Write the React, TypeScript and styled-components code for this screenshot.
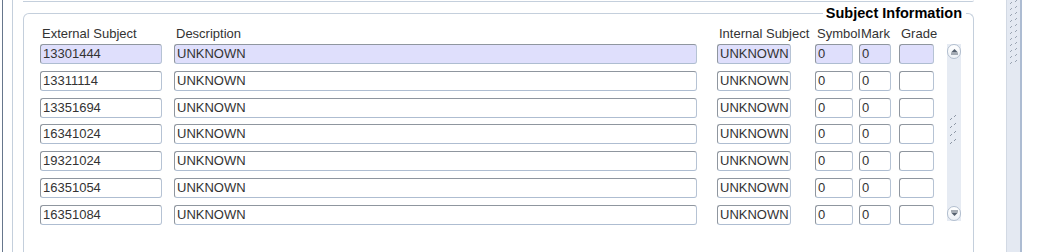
import styled, { createGlobalStyle } from "styled-components"

const GlobalStyle = createGlobalStyle`
  html, body {
    margin: 0;
    padding: 0;
    background: #ffffff;
  }
  body {
    width: 1040px;
    height: 252px;
    overflow: hidden;
    font-family: "Liberation Sans", Arial, sans-serif;
  }
`

type Column = { key: string; label: string; width: number; gap: number }

const columns: Column[] = [
  { key: "ext", label: "External Subject", width: 122, gap: 0 },
  { key: "desc", label: "Description", width: 523, gap: 12 },
  { key: "int", label: "Internal Subject", width: 74, gap: 20 },
  { key: "sym", label: "Symbol", width: 38, gap: 24 },
  { key: "mark", label: "Mark", width: 32, gap: 6 },
  { key: "grade", label: "Grade", width: 35, gap: 8 },
]

const codes = ["13301444", "13311114", "13351694", "16341024", "19321024", "16351054", "16351084"]

const rows = codes.map((code) => ({
  ext: code,
  desc: "UNKNOWN",
  int: "UNKNOWN",
  sym: "0",
  mark: "0",
  grade: "",
}))

export default function App() {
  return (
    <>
      <GlobalStyle />
      <Screen>
        <OuterRail />
        <Canvas>
          <UpperPanel />
          <Fieldset>
            <Legend>Subject Information</Legend>
            <HeaderRow>
              {columns.map((c) => (
                <HeaderLabel key={c.key} $w={c.width} $gap={c.gap}>
                  {c.label}
                </HeaderLabel>
              ))}
            </HeaderRow>
            <Body>
              <Rows>
                {rows.map((r, i) => (
                  <Row key={i}>
                    {columns.map((c) => (
                      <Field
                        key={c.key}
                        $w={c.width}
                        $gap={c.gap}
                        $current={i === 0}
                      >
                        {r[c.key as keyof typeof r]}
                      </Field>
                    ))}
                  </Row>
                ))}
              </Rows>
              <ScrollBar>
                <ScrollButton>
                  <svg width="9" height="7" viewBox="0 0 9 7">
                    <path d="M1 4.5 L4.5 1 L8 4.5 Z" fill="#55606e" />
                    <rect x="1" y="5.5" width="7" height="1" fill="#55606e" />
                  </svg>
                </ScrollButton>
                <Track>
                  <Grip width="8" height="34" viewBox="0 0 8 34">
                    {[0, 1, 2, 3].map((n) => (
                      <g key={n} fill="#8d97a5">
                        <rect x="5" y={n * 8 + 1} width="1" height="1" />
                        <rect x="4" y={n * 8 + 2} width="1" height="1" />
                        <rect x="1" y={n * 8 + 4} width="1" height="1" />
                        <rect x="0" y={n * 8 + 5} width="1" height="1" />
                      </g>
                    ))}
                  </Grip>
                </Track>
                <ScrollButton>
                  <svg width="9" height="7" viewBox="0 0 9 7">
                    <rect x="1" y="0.5" width="7" height="1" fill="#55606e" />
                    <path d="M1 2.5 L8 2.5 L4.5 6 Z" fill="#55606e" />
                  </svg>
                </ScrollButton>
              </ScrollBar>
            </Body>
          </Fieldset>
        </Canvas>
        <Splitter>
          <svg width="14" height="64" viewBox="0 0 14 64">
            {Array.from({ length: 11 }).map((_, n) => (
              <g key={n} fill="#9aa4b2">
                <rect x="4" y={n * 6 + 2} width="1" height="1" />
                <rect x="3" y={n * 6 + 3} width="1" height="1" />
                <rect x="9" y={n * 6 + 0} width="1" height="1" />
                <rect x="8" y={n * 6 + 1} width="1" height="1" />
              </g>
            ))}
          </svg>
        </Splitter>
      </Screen>
    </>
  )
}

const Screen = styled.div`
  display: flex;
  width: 1040px;
  height: 252px;
  background: #ffffff;
`

const OuterRail = styled.div`
  width: 9px;
  margin-left: 2px;
  border-left: 1px solid #66768c;
  border-right: 1px solid #c4cfdc;
  flex: none;
`

const Canvas = styled.div`
  width: 951px;
  padding-left: 10px;
  flex: none;
  display: flex;
  flex-direction: column;
`

const UpperPanel = styled.div`
  height: 1px;
  border-bottom: 1px solid #c4cfdc;
  border-bottom-right-radius: 4px;
  flex: none;
`

const Fieldset = styled.div`
  position: relative;
  margin-top: 11px;
  flex: 1;
  border: 1px solid #c4cfdc;
  border-bottom: none;
  border-radius: 6px 6px 0 0;
  padding: 11px 0 0 16px;
`

const Legend = styled.div`
  position: absolute;
  top: -9px;
  right: 7px;
  padding: 0 4px 0 3px;
  background: #ffffff;
  font-size: 14.5px;
  font-weight: bold;
  color: #000000;
  line-height: 17px;
`

const HeaderRow = styled.div`
  display: flex;
  height: 17px;
  align-items: center;
`

const HeaderLabel = styled.div<{ $w: number; $gap: number }>`
  width: ${(p) => p.$w}px;
  margin-left: ${(p) => p.$gap}px;
  padding-left: 2px;
  box-sizing: border-box;
  font-size: 13px;
  color: #333333;
  white-space: nowrap;
  flex: none;
`

const Body = styled.div`
  display: flex;
  margin-top: 2px;
`

const Rows = styled.div`
  display: flex;
  flex-direction: column;
  gap: 6.83px;
`

const Row = styled.div`
  display: flex;
`

const Field = styled.div<{ $w: number; $gap: number; $current: boolean }>`
  width: ${(p) => p.$w}px;
  height: 20px;
  margin-left: ${(p) => p.$gap}px;
  box-sizing: border-box;
  flex: none;
  border: 1px solid;
  border-color: #8f969f #b6c3d4 #aebdd1 #8f969f;
  border-radius: 3px;
  background: ${(p) => (p.$current ? "#dfdffc" : "#ffffff")};
  padding-left: 2px;
  font-size: 13px;
  line-height: 18px;
  color: #333333;
  white-space: nowrap;
  overflow: hidden;
`

const ScrollBar = styled.div`
  margin-left: 13px;
  width: 14px;
  height: 177px;
  display: flex;
  flex-direction: column;
  background: #e6ebf3;
`

const ScrollButton = styled.div`
  width: 14px;
  height: 15px;
  box-sizing: border-box;
  border: 1px solid #b3bfcf;
  border-radius: 7px;
  background: linear-gradient(#ffffff, #eef2f7);
  display: flex;
  align-items: center;
  justify-content: center;
  flex: none;
`

const Track = styled.div`
  flex: 1;
  display: flex;
  align-items: center;
  justify-content: center;
`

const Grip = styled.svg`
  margin-top: -4px;
`

const Splitter = styled.div`
  margin-left: 32px;
  width: 16px;
  height: 252px;
  box-sizing: border-box;
  background: #e4e9f2;
  border-left: 1px solid #d2d9e4;
  border-right: 2px solid #adbcd2;
  flex: none;
`
